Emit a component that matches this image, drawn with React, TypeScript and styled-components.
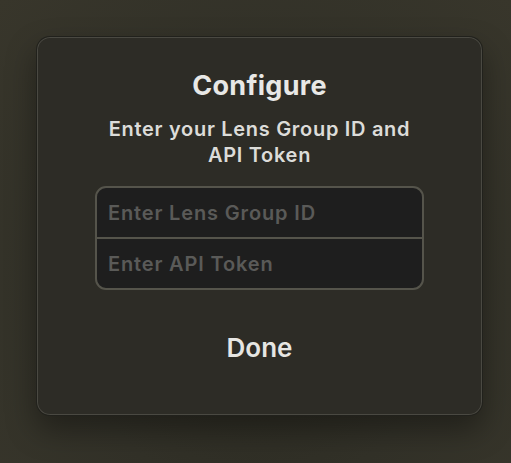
import React from "react";
import styled, { createGlobalStyle } from "styled-components";

const Global = createGlobalStyle`
  html, body { margin: 0; padding: 0; }
  body {
    background: #37352b;
    font-family: Inter, "Noto Sans", "Liberation Sans", sans-serif;
    -webkit-font-smoothing: antialiased;
  }
`;

const Page = styled.div`
  width: 511px;
  height: 463px;
  box-sizing: border-box;
  padding: 36px 28px 0 36px;
  background: radial-gradient(ellipse at 50% 60%, #29281f 0%, #323128 55%, #38362b 100%);
`;

const Dialog = styled.div`
  width: 447px;
  height: 380px;
  box-sizing: border-box;
  border-radius: 14px;
  background: #2d2c26;
  border: 1px solid #18181489;
  box-shadow: inset 0 0 0 1px #4a4942, 0 14px 30px rgba(0, 0, 0, 0.35);
  display: flex;
  flex-direction: column;
  align-items: center;
  padding-top: 32px;
`;

const Title = styled.h1`
  margin: 0;
  font-size: 27px;
  line-height: 34px;
  font-weight: 700;
  color: #e8e8e6;
  letter-spacing: 0.3px;
`;

const Subtitle = styled.p`
  margin: 13px 0 0;
  width: 322px;
  text-align: center;
  font-size: 20px;
  line-height: 26px;
  font-weight: 600;
  letter-spacing: 0.7px;
  color: #dcdcd9;
`;

const FieldGroup = styled.div`
  margin-top: 18px;
  width: 329px;
  box-sizing: border-box;
  border: 2px solid #55544b;
  border-radius: 11px;
  background: #1e1e1e;
  overflow: hidden;
  display: flex;
  flex-direction: column;
`;

const Field = styled.input<{ $divider?: boolean }>`
  height: ${(p) => (p.$divider ? "51px" : "49px")};
  box-sizing: border-box;
  border: none;
  border-top: ${(p) => (p.$divider ? "2px solid #55544b" : "none")};
  background: transparent;
  padding: 0 11px;
  font-family: inherit;
  font-size: 20px;
  font-weight: 600;
  letter-spacing: 0.85px;
  color: #ddd;
  outline: none;
  &::placeholder {
    color: #5a5a58;
  }
`;

const DoneButton = styled.button`
  margin-top: 42px;
  border: none;
  background: transparent;
  font-family: inherit;
  font-size: 26px;
  line-height: 32px;
  font-weight: 600;
  color: #e6e6e3;
  cursor: pointer;
  padding: 0;
`;

export default function App() {
  return (
    <>
      <Global />
      <Page>
        <Dialog>
          <Title>Configure</Title>
          <Subtitle>Enter your Lens Group ID and API Token</Subtitle>
          <FieldGroup>
            <Field placeholder="Enter Lens Group ID" />
            <Field $divider placeholder="Enter API Token" />
          </FieldGroup>
          <DoneButton>Done</DoneButton>
        </Dialog>
      </Page>
    </>
  );
}
